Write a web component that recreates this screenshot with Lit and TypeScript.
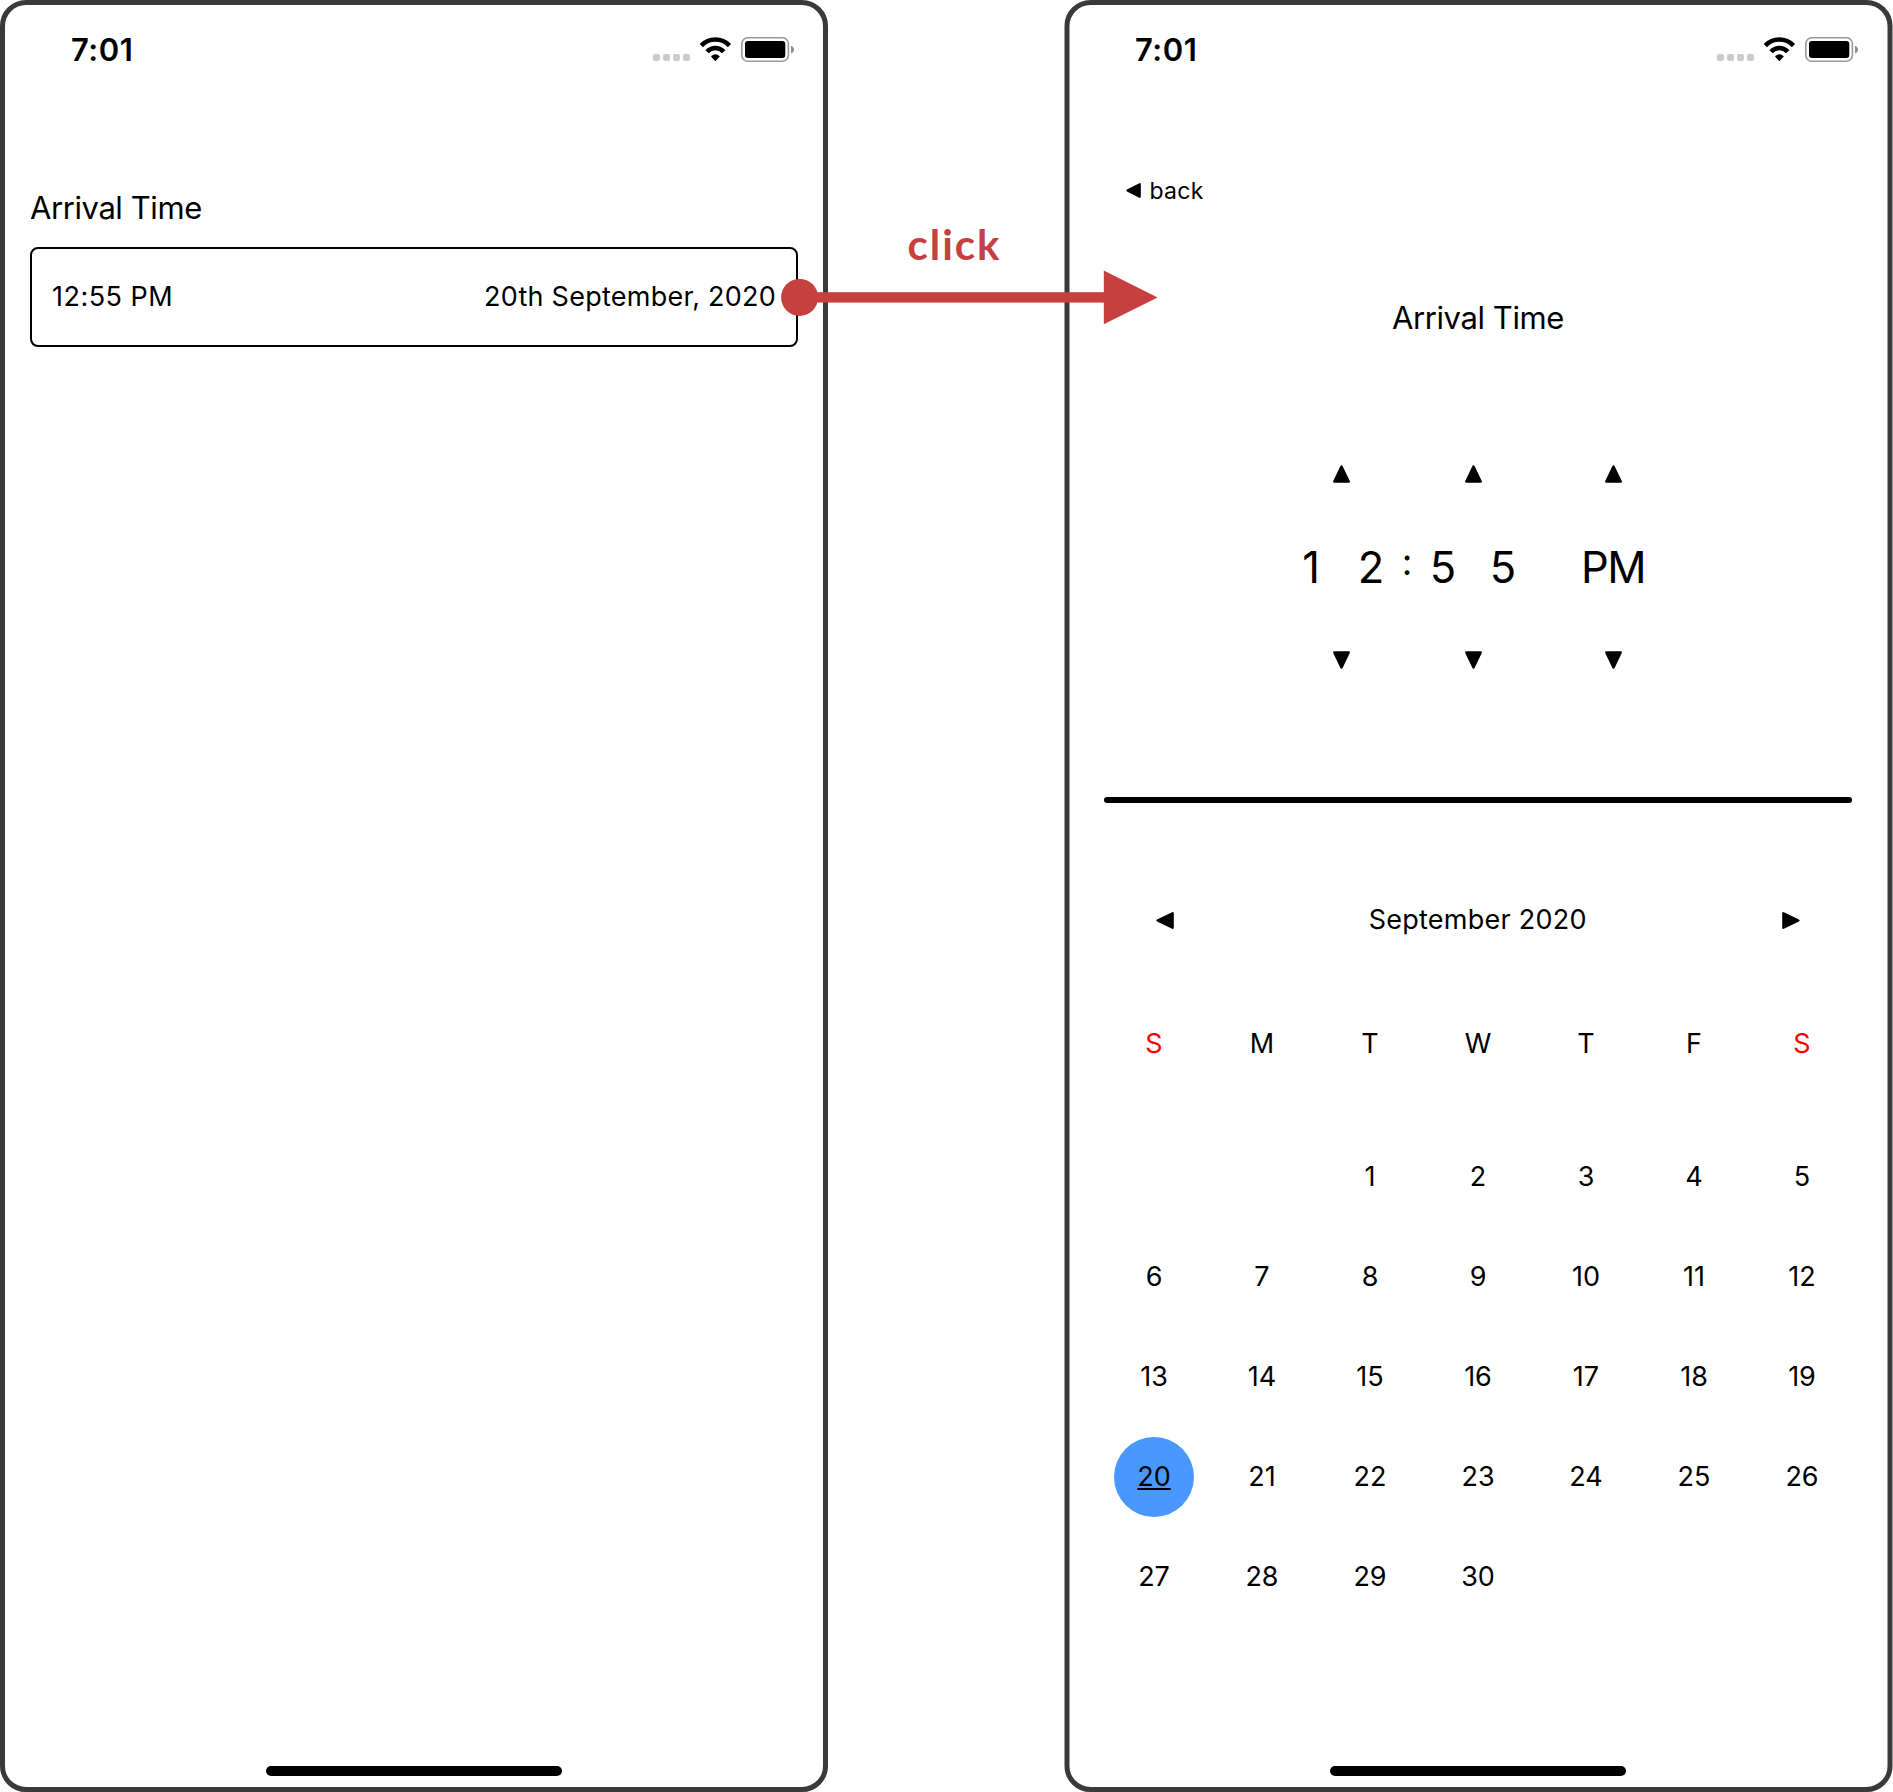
import { LitElement, html, css, svg } from "lit";
import { customElement, property } from "lit/decorators.js";
import { classMap } from "lit/directives/class-map.js";

type Direction = "up" | "down" | "left" | "right";

const TRIANGLES: Record<Direction, { box: string; d: string }> = {
  up: { box: "0 0 17 18", d: "M8.5 1.6L15.7 16.6H1.3Z" },
  down: { box: "0 0 17 18", d: "M8.5 16.4L15.7 1.4H1.3Z" },
  left: { box: "0 0 18 17", d: "M1.6 8.5L16.6 1.3V15.7Z" },
  right: { box: "0 0 18 17", d: "M16.4 8.5L1.4 1.3V15.7Z" },
};

@customElement("triangle-icon")
class TriangleIcon extends LitElement {
  @property() direction: Direction = "up";

  static styles = css`
    :host {
      display: block;
      width: 17px;
      height: 18px;
    }
    :host([direction="left"]),
    :host([direction="right"]) {
      width: 18px;
      height: 17px;
    }
    .shape {
      display: block;
      width: 100%;
      height: 100%;
      fill: #000;
      stroke: #000;
      stroke-width: 2.4;
      stroke-linejoin: round;
    }
  `;

  render() {
    const t = TRIANGLES[this.direction];
    return html`<svg class="shape" viewBox=${t.box} preserveAspectRatio="none">
      ${svg`<path d=${t.d}></path>`}
    </svg>`;
  }
}

@customElement("status-bar")
class StatusBar extends LitElement {
  static styles = css`
    :host {
      display: flex;
      align-items: center;
      justify-content: space-between;
      height: 99px;
      padding: 0 34px 0 71px;
    }
    .clock {
      font-size: 31px;
      font-weight: 600;
      line-height: 38px;
      letter-spacing: 0.5px;
    }
    .icons {
      display: flex;
      gap: 9px;
    }
    .icon {
      display: block;
      height: 25px;
    }
  `;

  render() {
    return html`
      <div class="clock">7:01</div>
      <div class="icons">
        <svg class="icon" width="37" viewBox="0 0 37 25" fill="#cbcbcb">
          <rect x="0" y="17" width="7" height="7" rx="2"></rect>
          <rect x="10" y="17" width="7" height="7" rx="2"></rect>
          <rect x="20" y="17" width="7" height="7" rx="2"></rect>
          <rect x="30" y="17" width="7" height="7" rx="2"></rect>
        </svg>
        <svg class="icon" width="33" viewBox="-0.4 0 33 25">
          <g fill="none" stroke="#000">
            <path stroke-width="4.6" d="M1.9 8.6A19.5 19.5 0 0 1 30.1 8.6"></path>
            <path stroke-width="4.5" d="M7.7 14.8A11 11 0 0 1 24.3 14.8"></path>
          </g>
          <path d="M11.6 19.6Q16 15 20.4 19.6L16 24.2Z"></path>
        </svg>
        <svg class="icon" width="53" viewBox="0 0 53 25">
          <rect x="0.8" y="0.8" width="46.6" height="23.4" rx="6" fill="none" stroke="#9a9a9a" stroke-width="1.6"></rect>
          <rect x="4" y="4" width="40.3" height="17" rx="3"></rect>
          <path d="M50 8.7Q53 9.8 53 12.5Q53 15.2 50 16.3Z" fill="#8c8c8c"></path>
        </svg>
      </div>
    `;
  }
}

@customElement("phone-frame")
class PhoneFrame extends LitElement {
  static styles = css`
    :host {
      position: relative;
      display: flex;
      flex-direction: column;
      flex: none;
      width: 828px;
      height: 1792px;
    }
    .bezel {
      position: absolute;
      inset: 0;
      box-sizing: border-box;
      border: 5px solid #3a3a3a;
      border-radius: 26px;
      pointer-events: none;
    }
    :host([nudged]) .bezel {
      transform: translateX(0.5px);
    }
    .screen {
      flex: 1;
    }
    .home {
      flex: none;
      width: 296px;
      height: 10px;
      border-radius: 5px;
      background: #000;
      margin: 0 auto 16px;
    }
  `;

  render() {
    return html`
      <status-bar></status-bar>
      <div class="screen"><slot></slot></div>
      <div class="home"></div>
      <div class="bezel"></div>
    `;
  }
}

@customElement("arrival-field")
class ArrivalField extends LitElement {
  static styles = css`
    :host {
      display: block;
      padding: 89px 30px 0;
    }
    .label {
      font-size: 31px;
      line-height: 40px;
      letter-spacing: -0.42px;
    }
    .box {
      display: flex;
      justify-content: space-between;
      align-items: center;
      box-sizing: border-box;
      height: 100px;
      margin-top: 19px;
      padding: 0 20px;
      border: 2px solid #000;
      border-radius: 8px;
      font-size: 27px;
      line-height: 34px;
    }
    .time {
      letter-spacing: 0.47px;
    }
    .date {
      letter-spacing: 0.25px;
    }
  `;

  render() {
    return html`
      <div class="label">Arrival Time</div>
      <div class="box">
        <span class="time">12:55 PM</span>
        <span class="date">20th September, 2020</span>
      </div>
    `;
  }
}

@customElement("time-picker")
class TimePicker extends LitElement {
  static styles = css`
    :host {
      display: flex;
      justify-content: center;
      padding-right: 2px;
    }
    .column {
      display: flex;
      flex-direction: column;
      align-items: center;
      width: 120px;
    }
    .column.period {
      margin-left: 20px;
    }
    .value {
      display: flex;
      height: 52px;
      margin: 58px 0;
      font-size: 43.5px;
      line-height: 52px;
    }
    .digit {
      width: 60px;
      text-align: center;
    }
    .word {
      letter-spacing: -1.5px;
    }
    .colon {
      display: flex;
      justify-content: center;
      width: 12px;
      padding-top: 73px;
      font-size: 37px;
      line-height: 48px;
    }
  `;

  private column(value: string) {
    return html`
      <div class="column">
        <triangle-icon direction="up"></triangle-icon>
        <div class="value">
          ${[...value].map((d) => html`<span class="digit">${d}</span>`)}
        </div>
        <triangle-icon direction="down"></triangle-icon>
      </div>
    `;
  }

  render() {
    return html`
      ${this.column("12")}
      <div class="colon">:</div>
      ${this.column("55")}
      <div class="column period">
        <triangle-icon direction="up"></triangle-icon>
        <div class="value"><span class="word">PM</span></div>
        <triangle-icon direction="down"></triangle-icon>
      </div>
    `;
  }
}

@customElement("month-calendar")
class MonthCalendar extends LitElement {
  static styles = css`
    :host {
      display: block;
      font-size: 27px;
      line-height: 34px;
    }
    .month {
      display: flex;
      align-items: center;
      justify-content: space-between;
      height: 40px;
      padding: 0 92.5px 0 92px;
    }
    .name {
      letter-spacing: 0.25px;
    }
    .grid {
      display: grid;
      grid-template-columns: repeat(7, 108px);
      justify-content: center;
    }
    .weekdays {
      margin-top: 84px;
    }
    .weekday {
      height: 40px;
      line-height: 40px;
      text-align: center;
    }
    .weekend {
      color: #f00;
    }
    .days {
      margin-top: 63px;
      grid-auto-rows: 100px;
      place-items: center;
    }
    .day {
      display: grid;
      place-items: center;
      width: 80px;
      height: 80px;
      border-radius: 50%;
    }
    .first {
      grid-column: 3;
    }
    .selected {
      background: #4898ff;
      text-decoration: underline;
      text-decoration-thickness: 2px;
      text-underline-offset: 2px;
      text-decoration-skip-ink: none;
    }
  `;

  render() {
    const weekdays = ["S", "M", "T", "W", "T", "F", "S"];
    const days = Array.from({ length: 30 }, (_, i) => i + 1);
    return html`
      <div class="month">
        <triangle-icon direction="left"></triangle-icon>
        <span class="name">September 2020</span>
        <triangle-icon direction="right"></triangle-icon>
      </div>
      <div class="grid weekdays">
        ${weekdays.map(
          (d, i) => html`<span class=${classMap({ weekday: true, weekend: i % 6 === 0 })}>${d}</span>`
        )}
      </div>
      <div class="grid days">
        ${days.map(
          (d) => html`<span class=${classMap({ day: true, first: d === 1, selected: d === 20 })}>${d}</span>`
        )}
      </div>
    `;
  }
}

@customElement("arrival-picker")
class ArrivalPicker extends LitElement {
  static styles = css`
    :host {
      display: block;
      padding-top: 76px;
    }
    .back {
      display: flex;
      align-items: center;
      gap: 8.5px;
      height: 30px;
      padding-left: 62px;
      font-size: 23px;
      line-height: 30px;
      letter-spacing: 0.3px;
    }
    .back-text {
      padding-top: 2px;
    }
    .back-icon {
      width: 15px;
      height: 15px;
    }
    .title {
      margin-top: 93px;
      font-size: 31px;
      line-height: 40px;
      letter-spacing: -0.42px;
      text-align: center;
    }
    .picker {
      margin-top: 127px;
    }
    .divider {
      height: 6px;
      margin: 128px 40px 97px;
      border-radius: 3px;
      background: #000;
    }
  `;

  render() {
    return html`
      <div class="back">
        <triangle-icon class="back-icon" direction="left"></triangle-icon>
        <span class="back-text">back</span>
      </div>
      <div class="title">Arrival Time</div>
      <time-picker class="picker"></time-picker>
      <div class="divider"></div>
      <month-calendar></month-calendar>
    `;
  }
}

@customElement("app-root")
class AppRoot extends LitElement {
  static styles = css`
    :host {
      position: relative;
      display: flex;
      gap: 236px;
      width: 1893px;
      height: 1792px;
      overflow: hidden;
      background: #fff;
      color: #000;
      font-family: Inter, "Liberation Sans", sans-serif;
    }
    .connector {
      position: absolute;
      left: 781px;
      top: 270px;
      display: block;
      fill: #c74040;
    }
    .caption {
      position: absolute;
      left: 907.5px;
      top: 220px;
      font-family: Lato, sans-serif;
      font-size: 42px;
      font-weight: 700;
      line-height: 48px;
      letter-spacing: 2px;
      color: #c74040;
    }
  `;

  render() {
    return html`
      <phone-frame><arrival-field></arrival-field></phone-frame>
      <phone-frame nudged><arrival-picker></arrival-picker></phone-frame>
      <svg class="connector" width="377" height="55" viewBox="0 0 377 55">
        <circle cx="18.6" cy="27.4" r="18.5"></circle>
        <rect x="18" y="22.2" width="306" height="10.4"></rect>
        <path d="M322.8 0.6L376.6 27.4L322.8 54.2Z"></path>
      </svg>
      <div class="caption">click</div>
    `;
  }
}
